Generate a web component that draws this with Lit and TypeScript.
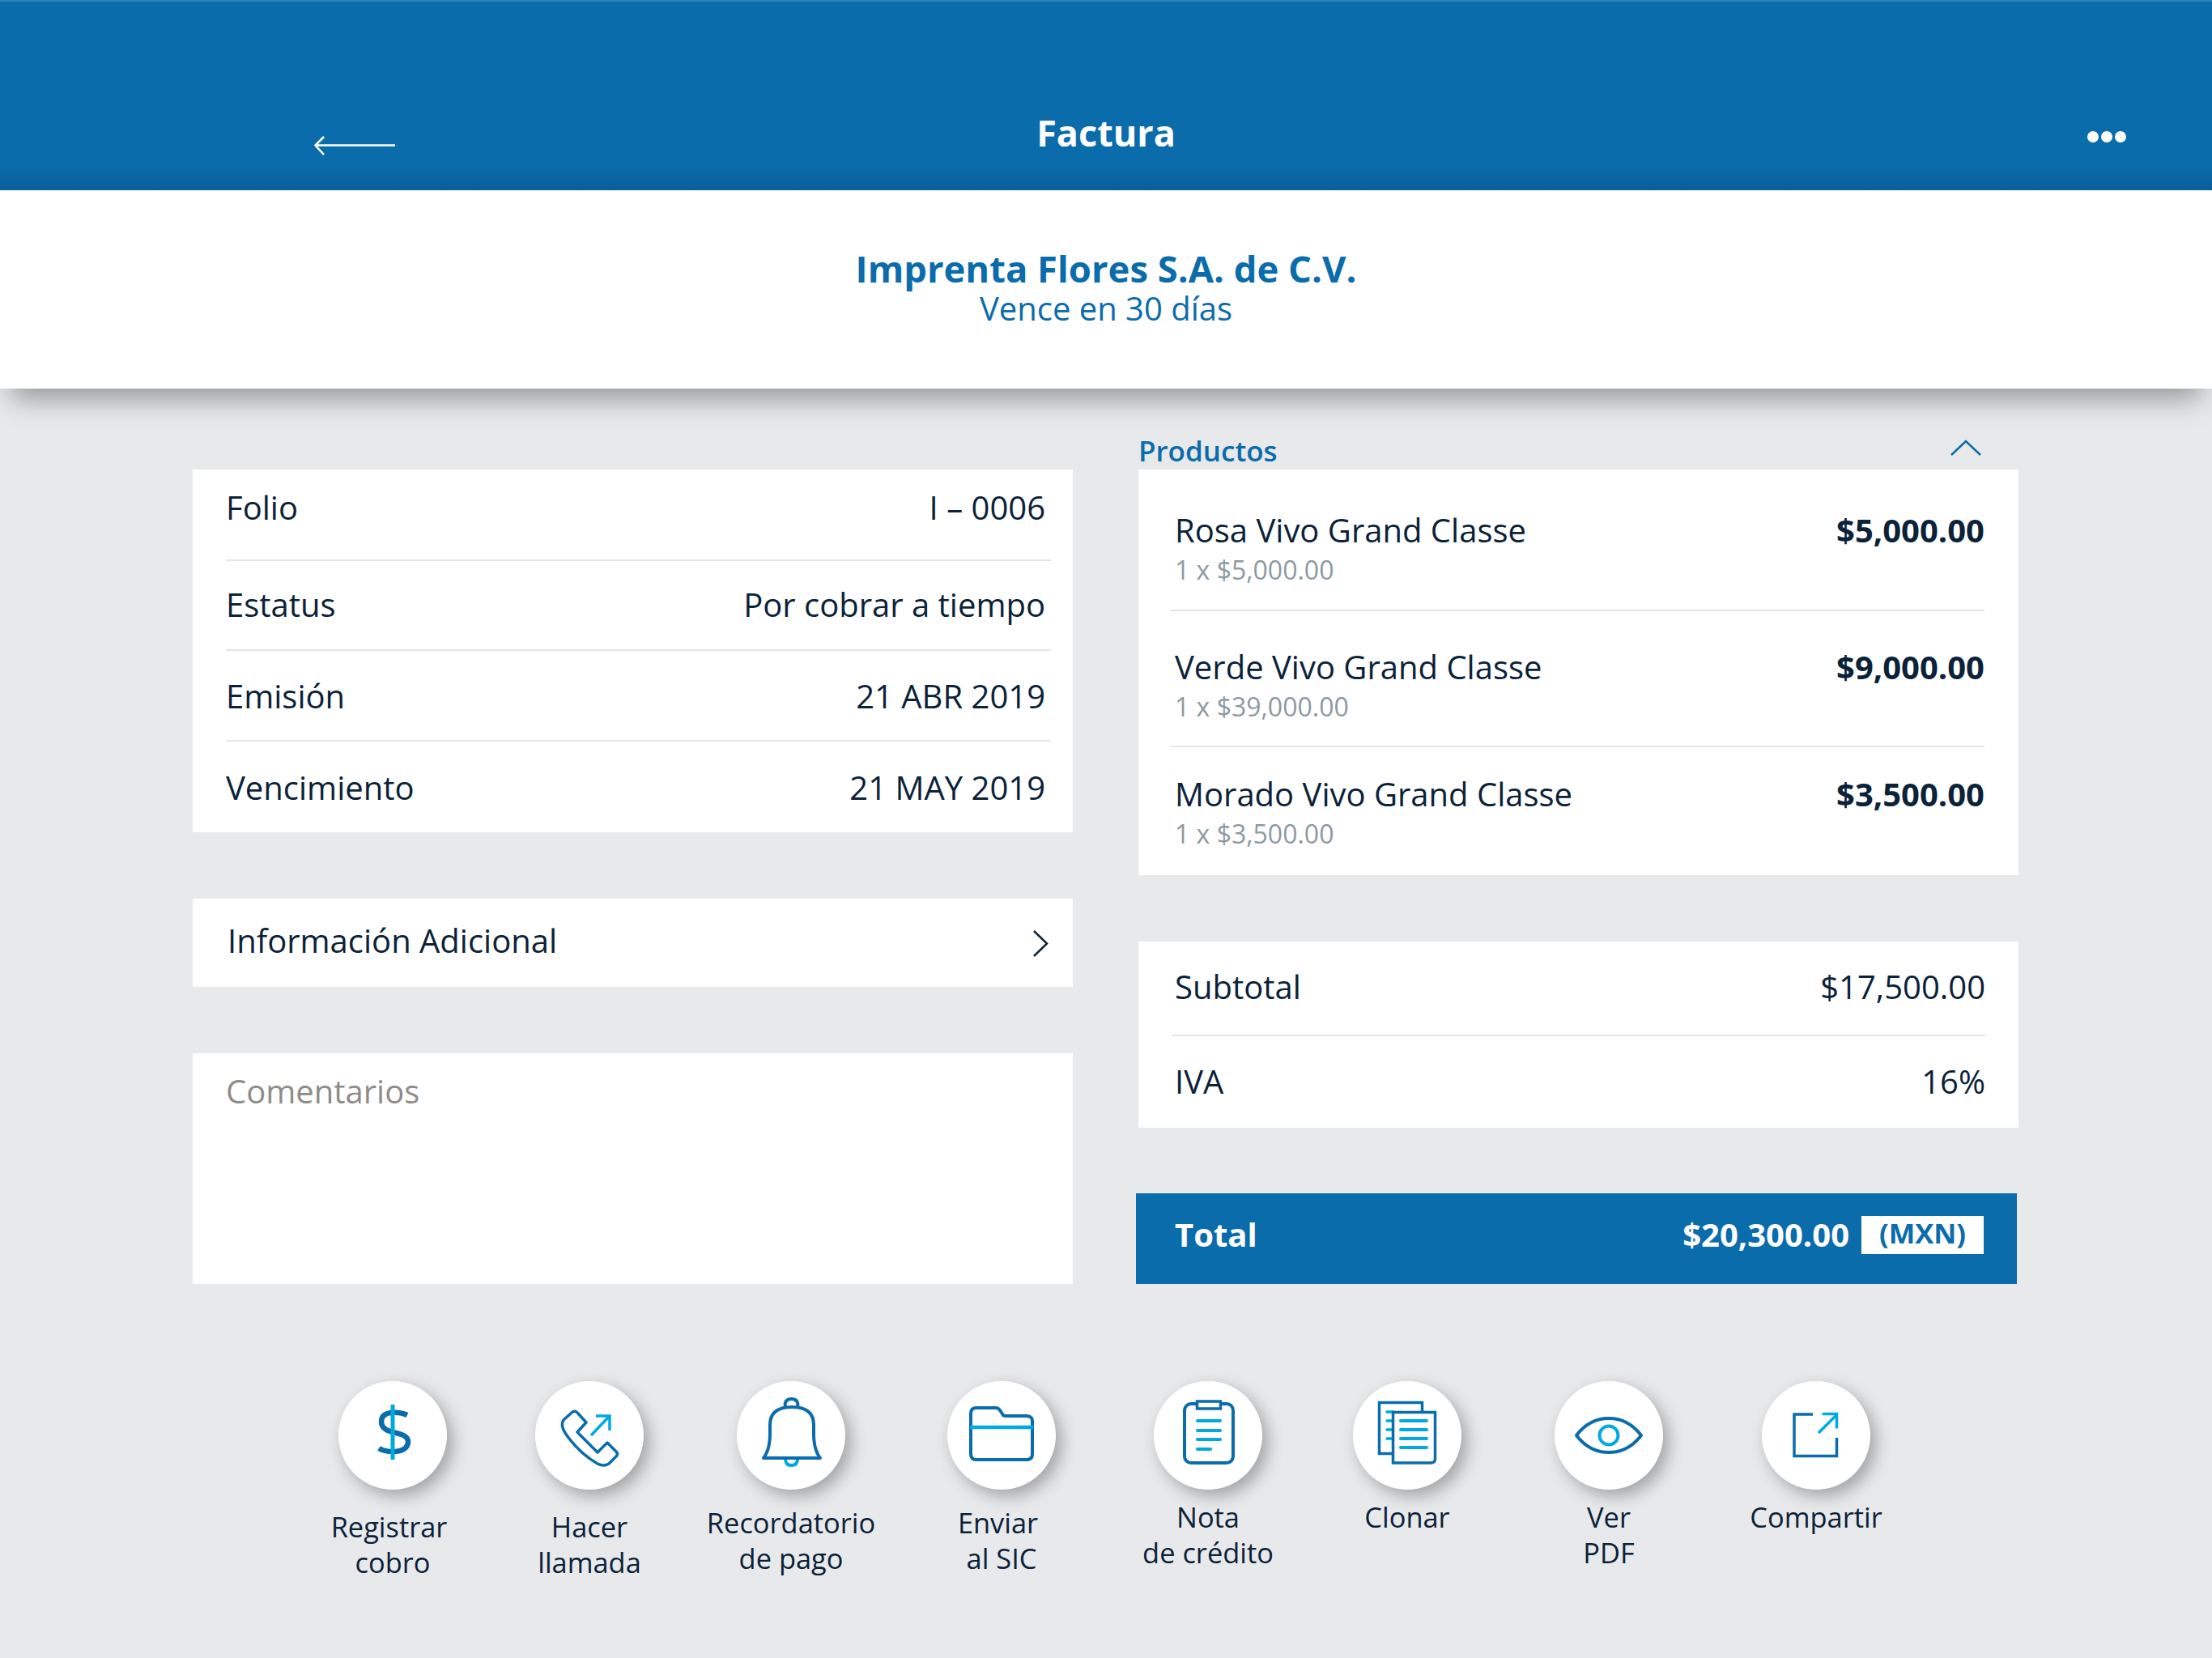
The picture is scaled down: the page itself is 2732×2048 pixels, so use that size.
import { LitElement, css, html, svg } from 'lit';
import { customElement } from 'lit/decorators.js';

const DARK = '#0b6cab';
const LIGHT = '#00a9e2';

// each icon is drawn inside the 134px circle
const icons = {
  dollar: svg`
    <path d="M85 42C77 38 53 35 53 50C53 68 86 60 86 75C86 90 59 89 50 83" fill="none" stroke=${DARK} stroke-width="6.5"/>
    <path d="M67 29V97" stroke=${LIGHT} stroke-width="5"/>`,
  phone: svg`
    <path d="M45 39Q49 35 53 40L63 51L52 63L77 88L89 76L100 87Q103 90 100 93L91 102Q85 106 77 102Q53 88 37 64Q31 54 35 48Z" fill="none" stroke=${DARK} stroke-width="3.5" stroke-linejoin="round"/>
    <path d="M69 67L91 44M75 43H92V61" fill="none" stroke=${LIGHT} stroke-width="3.5"/>`,
  bell: svg`
    <path d="M60 96Q60 104 67.5 104Q75 104 75 96" fill="none" stroke=${LIGHT} stroke-width="4"/>
    <path d="M60 33Q58 22 67.5 22Q77 22 75 33" fill="none" stroke=${DARK} stroke-width="4"/>
    <path d="M33 95Q41 85 41 65V54Q41 32 68 32Q95 32 95 54V65Q95 85 103 95Z" fill="none" stroke=${DARK} stroke-width="4" stroke-linejoin="round"/>`,
  folder: svg`
    <path d="M29 40Q29 33 36 33H60Q63 33 65 36L69 42Q70 43 72 43H98Q105 43 105 50V90Q105 97 98 97H36Q29 97 29 90Z" fill="none" stroke=${DARK} stroke-width="4"/>
    <path d="M28 57H106" stroke=${LIGHT} stroke-width="4.5"/>`,
  clipboard: svg`
    <rect x="38" y="28" width="60" height="73" rx="8" fill="none" stroke=${DARK} stroke-width="4"/>
    <rect x="53.5" y="25" width="29" height="9" fill="#fff" stroke=${DARK} stroke-width="3.5"/>
    <path d="M54 49H82M54 61H82M54 72H82M54 84H70" stroke=${LIGHT} stroke-width="4" stroke-linecap="round"/>`,
  clone: svg`
    <rect x="32.5" y="26.5" width="53" height="63" fill="none" stroke=${DARK} stroke-width="3.5"/>
    <path d="M42 38H50M42 49H50M42 60H50M42 71H50" stroke=${LIGHT} stroke-width="3.5" stroke-linecap="round"/>
    <path d="M49.5 38.5H101.5V96Q101.5 101 96 101H49.5Z" fill="#fff" stroke=${DARK} stroke-width="3.5"/>
    <path d="M59 49H91M59 60H91M59 71H91M59 82H91" stroke=${LIGHT} stroke-width="4" stroke-linecap="round"/>`,
  eye: svg`
    <path d="M27 67C40 50 54 46 67 46C80 46 94 50 107 67C94 84 80 88 67 88C54 88 40 84 27 67Z" fill="none" stroke=${DARK} stroke-width="4" stroke-linejoin="round"/>
    <circle cx="67" cy="67" r="11.5" fill="none" stroke=${LIGHT} stroke-width="4"/>`,
  share: svg`
    <path d="M63 41H40V92.5H92.5V70" fill="none" stroke=${DARK} stroke-width="3.5"/>
    <path d="M71 63L92 42M76 40.5H92.5V57" fill="none" stroke=${LIGHT} stroke-width="3.5" stroke-linecap="round"/>`,
};

const facts = [
  ['Folio', 'I – 0006'],
  ['Estatus', 'Por cobrar a tiempo'],
  ['Emisión', '21 ABR 2019'],
  ['Vencimiento', '21 MAY 2019'],
];

const products = [
  { name: 'Rosa Vivo Grand Classe', detail: '1 x $5,000.00', price: '$5,000.00' },
  { name: 'Verde Vivo Grand Classe', detail: '1 x $39,000.00', price: '$9,000.00' },
  { name: 'Morado Vivo Grand Classe', detail: '1 x $3,500.00', price: '$3,500.00' },
];

// shift = space before the button, drop = space between circle and label
const actions = [
  { icon: icons.dollar, lines: ['Registrar\u00a0', 'cobro'], shift: 0, drop: 24 },
  { icon: icons.phone, lines: ['Hacer', 'llamada'], shift: 3, drop: 24 },
  { icon: icons.bell, lines: ['Recordatorio', 'de pago'], shift: 9, drop: 19 },
  { icon: icons.folder, lines: ['Enviar\u00a0', 'al SIC'], shift: 20, drop: 19 },
  { icon: icons.clipboard, lines: ['Nota', 'de crédito'], shift: 15, drop: 12 },
  { icon: icons.clone, lines: ['Clonar'], shift: 6, drop: 12 },
  { icon: icons.eye, lines: ['Ver', 'PDF'], shift: 9, drop: 12 },
  { icon: icons.share, lines: ['Compartir'], shift: 16, drop: 12 },
];

@customElement('app-root')
export class AppRoot extends LitElement {
  static styles = css`
    :host {
      display: block;
      min-height: 2048px;
      background: #e8e9eb;
      font-family: 'Open Sans', sans-serif;
      color: #0b2239;
      font-size: 40px;
    }

    * {
      box-sizing: border-box;
    }

    .bar {
      height: 235px;
      padding: 133px 106px 0;
      display: grid;
      grid-template-columns: 1fr auto 1fr;
      border-top: 2px solid #2f80b8;
      background: linear-gradient(#0b6cab 87%, #0a5f99 100%);
      color: #fff;
    }

    .back {
      width: 102px;
      height: 24px;
      margin: 33px 0 0 282px;
      display: block;
    }

    .title {
      font-size: 45px;
      font-weight: 700;
      line-height: 58px;
    }

    .dots {
      display: flex;
      gap: 3px;
      margin-top: 27px;
      justify-self: end;
    }

    .dots i {
      width: 14px;
      height: 14px;
      border-radius: 50%;
      background: #fff;
    }

    .client {
      height: 245px;
      padding-top: 69px;
      background: #fff;
      text-align: center;
      color: #0b6cab;
      box-shadow: 0 26px 32px -14px rgba(0, 0, 0, 0.36);
      position: relative;
    }

    .client h1 {
      margin: 0;
      font-size: 45.4px;
      font-weight: 700;
      line-height: 54px;
    }

    .client p {
      margin: 0;
      font-size: 40px;
      line-height: 46px;
    }

    .columns {
      display: grid;
      grid-template-columns: 1087px 1087px;
      column-gap: 81px;
      padding: 100px 0 0 238px;
    }

    .col {
      display: flex;
      flex-direction: column;
      gap: 82px;
    }

    .card {
      background: #fff;
    }

    .facts {
      height: 448px;
      padding: 0 27px 0 41px;
    }

    .fact {
      height: 112px;
      padding-right: 7px;
      display: flex;
      align-items: center;
      justify-content: space-between;
      border-bottom: 2px solid #e4e5e6;
    }

    .fact:nth-child(1) {
      height: 113px;
      padding-bottom: 19px;
    }

    .fact:nth-child(2) {
      height: 111px;
      padding-bottom: 2px;
    }

    .fact:last-child {
      border-bottom: 0;
    }

    .more {
      height: 109px;
      padding: 0 30px 6px 43px;
      display: flex;
      align-items: center;
      justify-content: space-between;
    }

    .more svg {
      width: 20px;
      height: 33px;
      margin-top: 8px;
    }

    .comments {
      height: 285px;
      padding: 19px 41px;
      color: #8f8b87;
    }

    .right-col {
      gap: 0;
      margin-top: -45px;
    }

    .products-head {
      height: 45px;
      padding: 0 46px 0 0;
      display: flex;
      justify-content: space-between;
      color: #0b6cab;
      font-size: 35px;
      font-weight: 600;
      line-height: 43px;
    }

    .products-head svg {
      width: 38px;
      height: 20px;
      margin-top: 8px;
    }

    .products {
      height: 501px;
      padding: 0 42px 0 40px;
    }

    .product {
      display: grid;
      grid-template-columns: 1fr auto;
      align-content: start;
      padding-left: 5px;
      line-height: 49px;
      border-bottom: 2px solid #e4e5e6;
    }

    .product:nth-child(1) {
      height: 175px;
      padding-top: 50px;
    }

    .product:nth-child(2) {
      height: 168px;
      padding-top: 44px;
    }

    .product:nth-child(3) {
      height: 158px;
      padding-top: 33px;
      border-bottom: 0;
    }

    .price {
      font-weight: 700;
    }

    .detail {
      grid-column: 1 / 3;
      font-size: 32px;
      color: #8c9aa1;
    }

    .summary {
      height: 230px;
      margin-top: 82px;
      padding: 0 41px 0 41px;
    }

    .line {
      height: 115px;
      padding: 0 0 4px 4px;
      display: flex;
      align-items: center;
      justify-content: space-between;
    }

    .line + .line {
      padding-bottom: 2px;
      border-top: 2px solid #e4e5e6;
    }

    .total {
      height: 112px;
      margin: 81px 2px 0 -3px;
      padding: 0 41px 9px 48px;
      display: flex;
      align-items: center;
      background: #0b6cab;
      color: #fff;
      font-weight: 700;
    }

    .total span {
      padding-bottom: 3px;
    }

    .total .amount {
      margin-left: auto;
    }

    .total .currency {
      width: 151px;
      height: 47px;
      margin-left: 15px;
      padding: 0;
      background: #fff;
      color: #0b6cab;
      font-size: 34.5px;
      font-weight: 700;
      line-height: 42px;
      text-align: center;
    }

    .actions {
      display: flex;
      padding: 120px 0 0 365px;
    }

    .action {
      width: 240px;
      display: flex;
      flex-direction: column;
      align-items: center;
      font-size: 34.4px;
      line-height: 44px;
      text-align: center;
      white-space: nowrap;
    }

    .circle {
      width: 134px;
      height: 134px;
      border-radius: 50%;
      background: #fff;
      box-shadow: 7px 8px 20px rgba(0, 0, 0, 0.3);
    }

    .circle svg {
      display: block;
      width: 134px;
      height: 134px;
    }
  `;

  render() {
    return html`
      <header class="bar">
        <svg class="back" viewBox="0 0 102 24" fill="none" stroke="#fff" stroke-width="2.5">
          <path d="M12 1L1.5 11.5L12 23M2 11.5H100" />
        </svg>
        <div class="title">Factura</div>
        <div class="dots"><i></i><i></i><i></i></div>
      </header>
      <section class="client">
        <h1>Imprenta Flores S.A. de C.V.</h1>
        <p>Vence en 30 días</p>
      </section>
      <div class="columns">
        <div class="col">
          <div class="card facts">
            ${facts.map(
              ([label, value]) =>
                html`<div class="fact"><span>${label}</span><span>${value}</span></div>`
            )}
          </div>
          <div class="card more">
            <span>Información Adicional</span>
            <svg viewBox="0 0 20 33" fill="none" stroke="#0b2239" stroke-width="2.5">
              <path d="M2 1L18 16.5L2 32" />
            </svg>
          </div>
          <div class="card comments">Comentarios</div>
        </div>
        <div class="col right-col">
          <div class="products-head">
            <span>Productos</span>
            <svg viewBox="0 0 38 20" fill="none" stroke=${DARK} stroke-width="2.5">
              <path d="M1 19L19 2L37 19" />
            </svg>
          </div>
          <div class="card products">
            ${products.map(
              (p) => html`
                <div class="product">
                  <span>${p.name}</span>
                  <span class="price">${p.price}</span>
                  <span class="detail">${p.detail}</span>
                </div>
              `
            )}
          </div>
          <div class="card summary">
            <div class="line"><span>Subtotal</span><span>$17,500.00</span></div>
            <div class="line"><span>IVA</span><span>16%</span></div>
          </div>
          <div class="total">
            <span>Total</span>
            <span class="amount">$20,300.00</span>
            <span class="currency">(MXN)</span>
          </div>
        </div>
      </div>
      <div class="actions">
        ${actions.map(
          (a) => html`
            <div class="action" style="margin-left:${a.shift}px">
              <div class="circle"><svg viewBox="0 0 134 134">${a.icon}</svg></div>
              <div style="margin-top:${a.drop}px">
                ${a.lines.map((l) => html`<div>${l}</div>`)}
              </div>
            </div>
          `
        )}
      </div>
    `;
  }
}
